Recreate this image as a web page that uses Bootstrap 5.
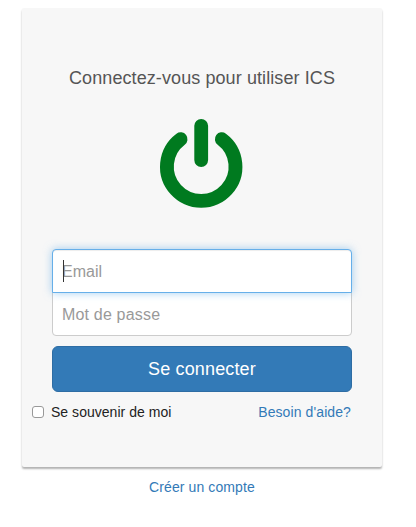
<!DOCTYPE html>
<html lang="fr">
<head>
<meta charset="utf-8">
<meta name="viewport" content="width=device-width, initial-scale=1">
<title>Connexion ICS</title>
<link href="https://cdn.jsdelivr.net/npm/bootstrap@5.3.0/dist/css/bootstrap.min.css" rel="stylesheet">
<style>
body{font-family:"Liberation Sans",Arial,sans-serif;font-size:14px;line-height:20px;color:#333;background:#fff;overflow:hidden}
a{color:#337ab7;text-decoration:none;letter-spacing:.1px}
.login-shell{width:360px;margin-left:22px;padding-top:8px}
.login-panel{height:459px;background:#f7f7f7;border-radius:2px;box-shadow:0 2px 2px rgba(0,0,0,.3);padding:60px 30px 0}
.login-title{font-size:18px;line-height:20px;font-weight:400;color:#555;white-space:nowrap;letter-spacing:.09px}
.power-icon{width:96px;height:96px;margin:27px auto 0;display:block}
.login-form{margin-top:38px}
.login-field{height:44px;padding:11px 9px 9px;font-size:16px;line-height:22px;border:1px solid #ccc;border-radius:4px;color:#555}
.login-field::placeholder{color:#999;opacity:1}
.email-box{z-index:2}
.email-box .login-field{border-color:#66afe9;border-radius:4px 4px 0 0;box-shadow:inset 0 1px 1px rgba(0,0,0,.075),0 0 8px rgba(102,175,233,.6)}
.email-box::after{content:"";position:absolute;left:11px;top:11px;width:1px;height:22px;background:#333}
.password-field{margin-top:-1px;border-radius:0 0 4px 4px;letter-spacing:.18px}
.login-button{height:46px;margin-top:10px;padding:0;font-size:18px;border-radius:6px;background:#337ab7;border-color:#2e6da4;color:#fff;letter-spacing:.15px}
.login-options{height:20px;margin:10px 1px 0 -20px}
.remember-box{width:12px;height:12px;margin:0 7px 0 0;border:1px solid #999;border-radius:3px;background:#fff;appearance:none}
.remember-label{color:#222;letter-spacing:.03px}
.create-link{margin-top:10px}
</style>
<script src="https://cdn.jsdelivr.net/npm/bootstrap@5.3.0/dist/js/bootstrap.bundle.min.js" defer></script>
</head>
<body>
<main class="login-shell">
  <section class="login-panel">
    <h1 class="login-title text-center mb-0">Connectez-vous pour utiliser ICS</h1>
    <svg class="power-icon" viewBox="0 0 96 96" fill="none" stroke="#007a1f" stroke-width="13.8" stroke-linecap="round" aria-hidden="true">
      <path d="M26.6 24.2A34.3 34.3 0 1 0 67.8 24.2M47.2 10.8V45"/>
    </svg>
    <form class="login-form">
      <div class="email-box position-relative">
        <input type="email" class="form-control login-field" placeholder="Email" aria-label="Email">
      </div>
      <input type="password" class="form-control login-field password-field" placeholder="Mot de passe" aria-label="Mot de passe">
      <button type="button" class="btn w-100 d-block login-button">Se connecter</button>
      <div class="login-options d-flex justify-content-between align-items-center">
        <label class="remember-label d-flex align-items-center"><input type="checkbox" class="remember-box"><span>Se souvenir de moi</span></label>
        <a href="#">Besoin d'aide?</a>
      </div>
    </form>
  </section>
  <a href="#" class="create-link d-block text-center">Créer un compte</a>
</main>
</body>
</html>
